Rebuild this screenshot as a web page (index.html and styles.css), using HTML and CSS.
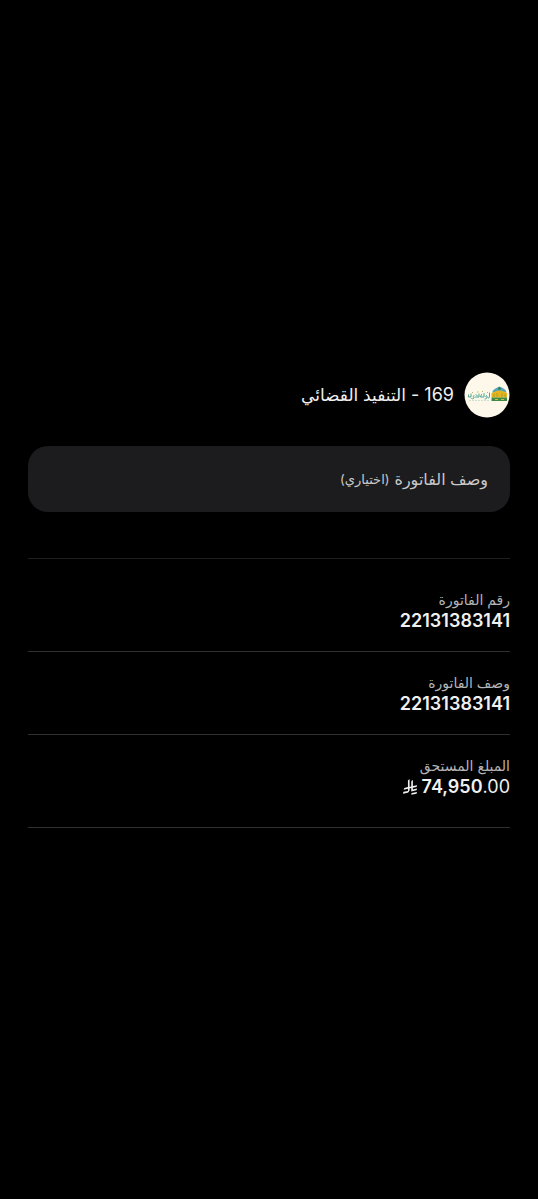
FILE: index.html
```html
<!DOCTYPE html>
<html lang="ar" dir="rtl">
<head>
<meta charset="utf-8">
<meta name="viewport" content="width=device-width, initial-scale=1">
<title>169 - التنفيذ القضائي</title>
<link rel="stylesheet" href="styles.css">
</head>
<body>
<main class="page">
  <header class="biller">
    <svg class="biller-logo" viewBox="0 0 46 46" aria-hidden="true">
      <circle cx="23" cy="23" r="22.5" fill="#fdf8ea"/>
      <path d="M28 20.500c1-3 3.500-4.500 7.500-6 4 1.500 6.500 3 7 6z" fill="#56a5b8"/>
      <circle cx="35.500" cy="16.500" r="1.300" fill="#2c7a4a"/>
      <path d="M27.500 21c3-1 4.500-2.500 8-2.500s5 1.500 7.500 2.500v4.500H27.500z" fill="#e3b51f"/>
      <path d="M30 22v3M33 21v4M38 21v4M41 22v3" stroke="#a98f2c" stroke-width=".7"/>
      <path d="M27.500 25.500h15.500v3.500H27.500z" fill="#3d8a45"/>
      <path d="M31 27.500h3M37 27.500h3" stroke="#dfbb32" stroke-width="1"/>
      <g fill="none" stroke="#4aa592" stroke-width="1" stroke-linecap="round">
        <path d="M25.500 21v4c-.5 1.500-2 1-2 0M22.500 23.500c-1 0-1 1.500 0 1.500s.5 2-1.500 2"/>
        <path d="M20 21.500v3.500h-3.500l1-2.500M15 22v3h-3.500M13.500 24l-1.500-1.500"/>
        <path d="M10 23.500c-1 0-1 1.500 0 1.500v1c-1 1-2 1-2.500.5M7 22v3H4.500v-2"/>
      </g>
      <path d="M23 20.500h1M18 19.500h1M13 20h1.500M8 20.500h1" stroke="#c3b45b" stroke-width="1"/>
      <path d="M5 28.500h20" stroke="#b9d8c7" stroke-width=".7" stroke-dasharray="2 1"/>
    </svg>
    <h1 class="biller-name">169 - <span class="biller-title">التنفيذ القضائي</span></h1>
  </header>

  <div class="field">
    <input class="field-input" id="description" type="text" placeholder=" ">
    <label class="field-label" for="description">وصف الفاتورة <small class="field-hint">(اختياري)</small></label>
  </div>

  <dl class="details">
    <div class="detail">
      <dt class="detail-label">رقم الفاتورة</dt>
      <dd class="detail-value">22131383141</dd>
    </div>
    <div class="detail">
      <dt class="detail-label">وصف الفاتورة</dt>
      <dd class="detail-value">22131383141</dd>
    </div>
    <div class="detail detail-total">
      <dt class="detail-label">المبلغ المستحق</dt>
      <dd class="detail-value amount" dir="ltr">
        <svg class="riyal" viewBox="0 0 1124 1256" role="img" aria-label="ريال" fill="currentColor">
          <path d="M699.620 1113.020c-20.060 44.480-33.320 92.750-38.400 143.370l424.510-90.240c20.060-44.470 33.310-92.750 38.400-143.370z"/>
          <path d="M1085.730 895.800c20.060-44.470 33.320-92.750 38.400-143.370l-330.680 70.330v-135.200l292.270-62.110c20.060-44.470 33.320-92.750 38.400-143.370l-330.680 70.270V66.130c-50.670 28.450-95.670 66.320-132.250 110.990v403.350l-132.250 28.110V0c-50.670 28.440-95.670 66.320-132.250 110.990v525.690l-295.910 62.880c-20.060 44.470-33.330 92.750-38.420 143.370l334.330-71.050v170.260l-358.300 76.140c-20.060 44.470-33.320 92.750-38.400 143.370l375.040-79.700c30.530-6.350 56.770-24.400 73.830-49.240l68.780-101.970c7.140-10.550 11.300-23.290 11.300-36.990v-149.980l132.250-28.110v270.400z"/>
        </svg>
        <span>74,950<span class="decimals">.00</span></span>
      </dd>
    </div>
  </dl>
</main>
</body>
</html>
```
FILE: styles.css
```css
* {
  box-sizing: border-box;
}

body {
  margin: 0;
  background: #000;
  color: #f0f0f0;
  font-family: Inter, "DejaVu Sans", sans-serif;
}

.page {
  display: flex;
  flex-direction: column;
  justify-content: center;
  min-height: 100vh;
  padding: 0 28px;
}

.biller {
  display: flex;
  align-items: center;
  gap: 10px;
  margin-bottom: 28px;
}

.biller-logo {
  width: 46px;
  height: 46px;
}

.biller-name {
  margin: 0;
  font-size: 18px;
  font-weight: 400;
  line-height: 24px;
}

.biller-title {
  font-size: 17px;
}

.field {
  position: relative;
  margin-bottom: 46px;
}

.field-input {
  display: block;
  width: 100%;
  height: 66px;
  padding: 0 22px;
  border: 0;
  border-radius: 20px;
  background: #1c1c1e;
  color: #f0f0f0;
  font: inherit;
  font-size: 16px;
}

.field-label {
  position: absolute;
  inset: 0 22px;
  display: flex;
  align-items: center;
  gap: 5px;
  color: #c9c9cb;
  font-size: 16px;
  line-height: 24px;
  pointer-events: none;
}

.field-input:not(:placeholder-shown) + .field-label {
  display: none;
}

.field-hint {
  font-size: 13px;
}

.details {
  margin: 0;
  border-top: 1px solid #1f1f20;
}

.detail {
  padding: 20px 0;
  border-bottom: 1px solid #303031;
}

.detail:first-child {
  padding-top: 30px;
}

.detail-total {
  padding-bottom: 30px;
}

.detail-label {
  color: #b4b4b6;
  font-size: 14px;
  line-height: 22px;
}

.detail-value {
  margin: 0;
  font-size: 18px;
  font-weight: 600;
  line-height: 20px;
}

.amount {
  display: flex;
  align-items: center;
  justify-content: flex-end;
  gap: 5px;
}

.riyal {
  width: 14px;
  height: 16px;
}

.decimals {
  font-weight: 400;
}
```
